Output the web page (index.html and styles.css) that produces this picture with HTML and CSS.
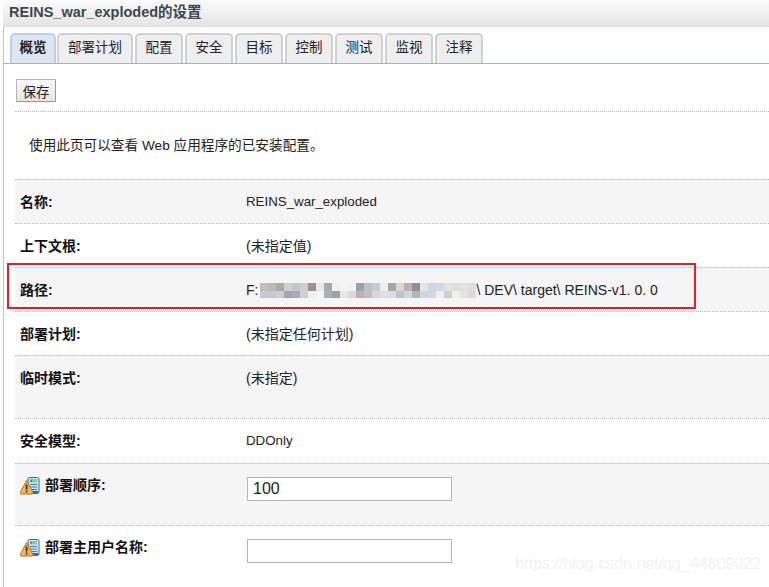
FILE: index.html
```html
<!DOCTYPE html>
<html lang="zh">
<head>
<meta charset="utf-8">
<title>REINS_war_exploded的设置</title>
<link rel="stylesheet" href="styles.css">
</head>
<body>
<svg class="defs" width="0" height="0" aria-hidden="true">
  <symbol id="warn" viewBox="0 0 20 18">
    <rect x="8" y="0.5" width="11" height="16" rx="1.5" fill="#cfe3f3" stroke="#2f6ea5"/>
    <rect x="10" y="2" width="7" height="3.5" fill="#8fc9a0"/>
    <rect x="10" y="2.8" width="2" height="2" fill="#2fa84f"/>
    <path d="M10 7.5h7M10 10h7M10 12.5h7" stroke="#3d7fb5" stroke-width="1"/>
    <rect x="9" y="14" width="9" height="2" fill="#2f6ea5"/>
    <path d="M6.5 3.5 L13 15.5 Q13.3 17 12 17 L1 17 Q-0.3 17 0.2 15.5 Z" fill="#f3b45c" stroke="#b0742c" stroke-width="1" stroke-linejoin="round"/>
    <rect x="5.7" y="7.5" width="1.8" height="5" fill="#4a2f14"/>
    <rect x="5.7" y="13.5" width="1.8" height="1.8" fill="#4a2f14"/>
  </symbol>
</svg>
<div class="page">
  <header class="title">REINS_war_exploded的设置</header>
  <nav class="tabs">
    <a class="tab active">概览</a>
    <a class="tab wide">部署计划</a>
    <a class="tab">配置</a>
    <a class="tab">安全</a>
    <a class="tab">目标</a>
    <a class="tab">控制</a>
    <a class="tab">测试</a>
    <a class="tab">监视</a>
    <a class="tab">注释</a>
  </nav>
  <main class="content">
    <div class="toolbar"><button class="btn" type="button">保存</button></div>
    <p class="intro">使用此页可以查看 Web 应用程序的已安装配置。</p>
    <div class="row shade r44"><div class="label">名称:</div><div class="value latin">REINS_war_exploded</div></div>
    <div class="row r44"><div class="label">上下文根:</div><div class="value">(未指定值)</div></div>
    <div class="row shade r44"><div class="label">路径:</div><div class="value path">F:<svg class="blur" width="216" height="15" viewBox="0 0 27 2" preserveAspectRatio="none" aria-hidden="true"><g shape-rendering="crispEdges">
      <rect x="0" width="1" height="1" fill="#c9bcbe"/><rect x="1" width="1" height="1" fill="#bcb9b3"/><rect x="2" width="1" height="1" fill="#a9aba5"/><rect x="3" width="1" height="1" fill="#cfd1cd"/><rect x="4" width="1" height="1" fill="#c4c8c8"/><rect x="5" width="1" height="1" fill="#cccfd0"/><rect x="6" width="1" height="1" fill="#9f8e94"/><rect x="7" width="1" height="1" fill="#e8eaea"/><rect x="8" width="1" height="1" fill="#a8ada6"/><rect x="9" width="1" height="1" fill="#f0f0f0"/><rect x="10" width="1" height="1" fill="#f5f5f5"/><rect x="11" width="1" height="1" fill="#f0f2f6"/><rect x="12" width="1" height="1" fill="#94a4a7"/><rect x="13" width="1" height="1" fill="#bcc3c7"/><rect x="14" width="1" height="1" fill="#c8ccd0"/><rect x="15" width="1" height="1" fill="#eeeeee"/><rect x="16" width="1" height="1" fill="#aaa7ab"/><rect x="17" width="1" height="1" fill="#d6d7d2"/><rect x="18" width="1" height="1" fill="#bdb0b4"/><rect x="19" width="1" height="1" fill="#8f8e94"/><rect x="20" width="1" height="1" fill="#e5e5e5"/><rect x="21" width="1" height="1" fill="#cfd8e0"/><rect x="22" width="1" height="1" fill="#cfdbe4"/><rect x="23" width="1" height="1" fill="#e3e1de"/><rect x="24" width="1" height="1" fill="#dedcdc"/><rect x="25" width="1" height="1" fill="#e3e1e0"/><rect x="26" width="1" height="1" fill="#dfdddc"/>
      <rect x="0" y="1" width="1" height="1" fill="#c6cad0"/><rect x="1" y="1" width="1" height="1" fill="#c4c9cf"/><rect x="2" y="1" width="1" height="1" fill="#cdd0cc"/><rect x="3" y="1" width="1" height="1" fill="#a89fb8"/><rect x="4" y="1" width="1" height="1" fill="#aaa8bb"/><rect x="5" y="1" width="1" height="1" fill="#cdd0d6"/><rect x="6" y="1" width="1" height="1" fill="#f0f0f4"/><rect x="7" y="1" width="1" height="1" fill="#f5f5f5"/><rect x="8" y="1" width="1" height="1" fill="#aab0b3"/><rect x="9" y="1" width="1" height="1" fill="#9aa4ac"/><rect x="10" y="1" width="1" height="1" fill="#e8e8e6"/><rect x="11" y="1" width="1" height="1" fill="#d8d8d4"/><rect x="12" y="1" width="1" height="1" fill="#c0b0b8"/><rect x="13" y="1" width="1" height="1" fill="#c8bcc4"/><rect x="14" y="1" width="1" height="1" fill="#d8d8da"/><rect x="15" y="1" width="1" height="1" fill="#e2dce8"/><rect x="16" y="1" width="1" height="1" fill="#d8dee0"/><rect x="17" y="1" width="1" height="1" fill="#b8c8cc"/><rect x="18" y="1" width="1" height="1" fill="#cdd9dc"/><rect x="19" y="1" width="1" height="1" fill="#b4b4b4"/><rect x="20" y="1" width="1" height="1" fill="#cfd6e0"/><rect x="21" y="1" width="1" height="1" fill="#d0d8e2"/><rect x="22" y="1" width="1" height="1" fill="#f0f0ee"/><rect x="23" y="1" width="1" height="1" fill="#d0d0cc"/><rect x="24" y="1" width="1" height="1" fill="#f0f0ee"/><rect x="25" y="1" width="1" height="1" fill="#e4e4e2"/><rect x="26" y="1" width="1" height="1" fill="#d4dce0"/>
      </g></svg>\ DEV\ target\ REINS-v1. 0. 0</div></div>
    <div class="row r44"><div class="label">部署计划:</div><div class="value">(未指定任何计划)</div></div>
    <div class="row shade r63"><div class="label">临时模式:</div><div class="value">(未指定)</div></div>
    <div class="row r45"><div class="label">安全模型:</div><div class="value latin">DDOnly</div></div>
    <div class="row shade r62"><div class="label icon-label"><svg class="warn" width="20" height="18"><use href="#warn"/></svg>部署顺序:</div><div class="value"><input class="field" type="text" value="100"></div></div>
    <div class="row r62"><div class="label icon-label"><svg class="warn" width="20" height="18"><use href="#warn"/></svg>部署主用户名称:</div><div class="value"><input class="field" type="text"></div></div>
  </main>
</div>
<div class="highlight"></div>
<div class="watermark">https://blog.csdn.net/qq_44809022</div>
</body>
</html>
```
FILE: styles.css
```css
* { box-sizing: border-box; }
html, body { margin: 0; padding: 0; height: 587px; overflow: hidden; background: #fff; }
body { position: relative; font-family: "Liberation Sans", "Noto Sans CJK SC", sans-serif; font-size: 14px; color: #222; }
.defs { position: absolute; }
.page { margin-left: 3px; border-left: 1px solid #c4c4c4; height: 587px; }
.title { height: 27px; line-height: 25px; padding-left: 6px; margin-left: -1px; font-weight: bold; font-size: 14.5px; color: #3b4a4c; background: linear-gradient(#fbfbfb, #e3e4e3); border-bottom: 1px solid #dcdcdc; }
.tabs { display: flex; gap: 2px; height: 37px; padding: 6px 0 0 6px; border-bottom: 1px solid #9db5ca; }
.tab { display: block; flex: none; width: 48px; height: 30px; text-align: center; line-height: 26px; font-size: 13.5px; color: #222; background: #eee; border: 2px solid #d0d0d0; border-bottom: 0; border-radius: 5px 5px 0 0; }
.tab.wide { width: 76px; }
.tab.active { width: 46px; margin-right: -1px; background: #dae7f2; border-color: #bdd0e2; font-weight: bold; }
.content { padding-left: 11px; }
.toolbar { height: 48px; padding: 15px 0 0 1px; border-bottom: 1px dotted #bbb; }
.btn { display: block; width: 40px; height: 23px; padding: 0; font: 13.5px "Liberation Sans", "Noto Sans CJK SC", sans-serif; color: #222; background: linear-gradient(#f8f8f8, #e6e6e6); border: 1px solid #b5b5b5; border-bottom-color: #999; border-right-color: #999; }
.intro { height: 67px; margin: 0; padding: 24px 0 0 14px; line-height: 20px; font-size: 13.65px; }
.row { display: flex; border-top: 1px dotted #bbb; }
.shade { background: #f5f5f5; }
.r44 { height: 44px; }
.r45 { height: 45px; }
.r62 { height: 62px; }
.r63 { height: 63px; }
.label { width: 231px; padding: 13px 0 0 5px; line-height: 18px; font-weight: bold; font-size: 14px; color: #111; flex: none; }
.icon-label { display: flex; align-items: flex-start; padding-top: 12px; }
.warn { margin-right: 5px; margin-top: 1px; flex: none; }
.value { padding-top: 13px; line-height: 18px; font-size: 14px; color: #222; }
.latin { font-size: 13.3px; }
.path { white-space: nowrap; }
.blur { vertical-align: -3px; margin-left: 2px; }
.field { display: block; width: 205px; height: 24px; margin: 0 0 0 1px; padding: 0 5px; font: 16px "Liberation Sans", sans-serif; color: #222; border: 1px solid #b4b4b4; background: #fff; }
.highlight { position: absolute; left: 7px; top: 263px; width: 689px; height: 46px; border: 2px solid #ed1c24; pointer-events: none; }
.watermark { position: absolute; right: 8px; bottom: 14px; font: 16px "Liberation Sans", sans-serif; color: #f2f2f2; pointer-events: none; }
```
